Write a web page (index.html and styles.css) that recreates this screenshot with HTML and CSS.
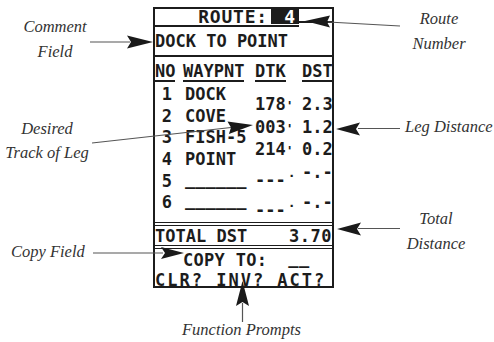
FILE: index.html
```html
<!DOCTYPE html>
<html lang="en">
  <head>
    <meta charset="UTF-8" />
    <title>Route Page</title>
    <link rel="stylesheet" href="styles.css">
  </head>
  <body>
    <div class="stage">
      <div class="screen">
        <div class="title">
          <div class="title-main">
            <span class="route-name">ROUTE:</span>
            <span class="route-num">4</span>
          </div>
          <div class="title-spare"></div>
        </div>

        <div class="comment">DOCK TO POINT</div>

        <div class="head">
          <span class="h-no"><span class="ul">NO</span></span>
          <span class="h-name"><span class="ul">WAYPNT</span></span>
          <span class="h-dtk"><span class="ul">DTK</span></span>
          <span class="h-dst"><span class="ul">DST</span></span>
        </div>

        <div class="route-table">
          <div class="wpts">
            <div class="wpt"><span class="num">1</span><span class="name">DOCK</span></div>
            <div class="wpt"><span class="num">2</span><span class="name">COVE</span></div>
            <div class="wpt"><span class="num">3</span><span class="name">FISH-5</span></div>
            <div class="wpt"><span class="num">4</span><span class="name">POINT</span></div>
            <div class="wpt"><span class="num">5</span><span class="name"><span class="blank">______</span></span></div>
            <div class="wpt"><span class="num">6</span><span class="name"><span class="blank">______</span></span></div>
          </div>
          <div class="legs">
            <div class="leg"><span class="dtk">178<span class="deg">'</span></span><span class="dst">2.3</span></div>
            <div class="leg"><span class="dtk">003<span class="deg">'</span></span><span class="dst">1.2</span></div>
            <div class="leg"><span class="dtk">214<span class="deg">'</span></span><span class="dst">0.2</span></div>
            <div class="leg"><span class="dtk">---<span class="deg dot">.</span></span><span class="dst">-.-</span></div>
            <div class="leg"><span class="dtk">---<span class="deg dot">.</span></span><span class="dst">-.-</span></div>
          </div>
        </div>

        <div class="total">
          <span>TOTAL DST</span>
          <span class="total-val">3.70</span>
        </div>
        <div class="copy">COPY TO:&nbsp;&nbsp;<span class="blank">__</span></div>
        <div class="prompts">CLR? INV? ACT?</div>
      </div>

      <!-- callout arrows -->
      <svg class="callouts" width="494" height="342" viewBox="0 0 494 342">
        <g class="lead">
          <line x1="90" y1="42" x2="130" y2="42" />
          <line x1="92" y1="143" x2="231" y2="127.5" />
          <line x1="93" y1="253" x2="163" y2="253" />
          <line x1="400" y1="26" x2="328" y2="22" />
          <line x1="358" y1="128.5" x2="400" y2="128.5" />
          <line x1="358" y1="228.5" x2="400" y2="228.5" />
          <line x1="242.5" y1="303" x2="242.5" y2="322" />
        </g>
        <g class="head-tip">
          <polygon points="153,42 127,35.5 131,42 127,48.5" />
          <polygon points="253,125 227.5,121.6 231,127.4 228.9,134" />
          <polygon points="184,253 161,247 165,253 161,259" />
          <polygon points="305,21 330,15.5 327,22 330,27.5" />
          <polygon points="336,129 360,122.5 356,129 360,135.5" />
          <polygon points="337,229 361,222.5 357,229 361,235.5" />
          <polygon points="242.5,281 236,306 242.5,302 249,306" />
        </g>
      </svg>

      <div class="label lbl-comment">Comment<br>Field</div>
      <div class="label lbl-track">Desired<br>Track of Leg</div>
      <div class="label lbl-copy">Copy Field</div>
      <div class="label lbl-route">Route<br>Number</div>
      <div class="label lbl-leg">Leg Distance</div>
      <div class="label lbl-total">Total<br>Distance</div>
      <div class="label lbl-func">Function Prompts</div>
    </div>
  </body>
</html>
```

FILE: styles.css
```css
body {
  margin: 0;
  background: #fff;
}

.stage {
  position: relative;
  width: 494px;
  height: 342px;
  overflow: hidden;
  background: #fff;
}

/* gps screen */
.screen {
  box-sizing: border-box;
  width: 181px;
  height: 281px;
  margin: 7px 0 0 153px;
  border: 2px solid #1c1c1c;
  font-family: "DejaVu Sans Mono", monospace;
  font-weight: bold;
  font-size: 17px;
  line-height: 18px;
  color: #1c1c1c;
}

.title {
  display: flex;
  align-items: flex-start;
}

.title-main {
  display: flex;
  flex: 1;
  padding-bottom: 1px;
  border-bottom: 2px solid #1c1c1c;
  font-size: 18px;
  line-height: 15px;
}

.route-name {
  flex: 1;
  text-align: right;
  letter-spacing: 0.8px;
  padding-right: 3px;
}

.route-num {
  width: 28px;
  margin-top: -2px;
  padding-top: 2px;
  background: #1c1c1c;
  color: #fff;
  text-align: right;
  padding-right: 4px;
  box-sizing: border-box;
}

.title-spare {
  width: 33px;
  height: 12px;
  border-bottom: 2px solid #1c1c1c;
}

.comment {
  padding: 3.5px 0 4px;
  line-height: 20px;
  border-bottom: 2px solid #1c1c1c;
}

.head {
  display: grid;
  grid-template-columns: 28px 72px 47px 30px;
  margin-top: 5.5px;
}

.head .ul {
  display: inline-block;
  border-bottom: 2px solid #1c1c1c;
}

.h-dst {
  text-align: right;
}

.route-table {
  display: flex;
  margin-top: 2.2px;
}

.wpts {
  width: 100px;
}

.wpt {
  display: grid;
  grid-template-columns: 28px 72px;
  line-height: 21.6px;
}

.num {
  text-align: right;
  padding-right: 11px;
}

.name {
  padding-left: 2px;
}

.blank {
  line-height: 10px;
  vertical-align: 2px;
}

.legs {
  width: 77px;
  padding-top: 10px;
}

.leg {
  display: grid;
  grid-template-columns: 47px 30px;
  line-height: 21.6px;
}

.dst {
  text-align: right;
}

.deg {
  font-size: 13px;
}

.deg.dot {
  vertical-align: 9px;
  padding-left: 2px;
}

.total {
  display: flex;
  justify-content: space-between;
  margin-top: 1px;
  padding-top: 1px;
  border-top: 4px double #1c1c1c;
  border-bottom: 4px double #1c1c1c;
}

.total-val {
  letter-spacing: 0.5px;
}

.copy {
  margin-top: 2.2px;
  padding-left: 28px;
  letter-spacing: 0.3px;
}

.prompts {
  margin-top: 2px;
  letter-spacing: 2px;
  white-space: nowrap;
}

/* callouts */
.callouts {
  position: absolute;
  top: 0;
  left: 0;
}

.lead line {
  stroke: #555;
  stroke-width: 1.2;
}

.head-tip polygon {
  fill: #1a1a1a;
}

.label {
  position: absolute;
  font-family: "Liberation Serif", serif;
  font-style: italic;
  font-size: 16.5px;
  line-height: 25px;
  color: #333;
  text-align: center;
  white-space: nowrap;
}

.lbl-comment { left: 15px; top: 13.5px; width: 80px; }
.lbl-track { left: 0; top: 117px; width: 94px; line-height: 24px; }
.lbl-copy { left: 11px; top: 238.5px; }
.lbl-route { left: 399px; top: 6px; width: 80px; }
.lbl-leg { left: 405px; top: 114px; }
.lbl-total { left: 396px; top: 206px; width: 80px; }
.lbl-func { left: 182px; top: 317px; }
```
